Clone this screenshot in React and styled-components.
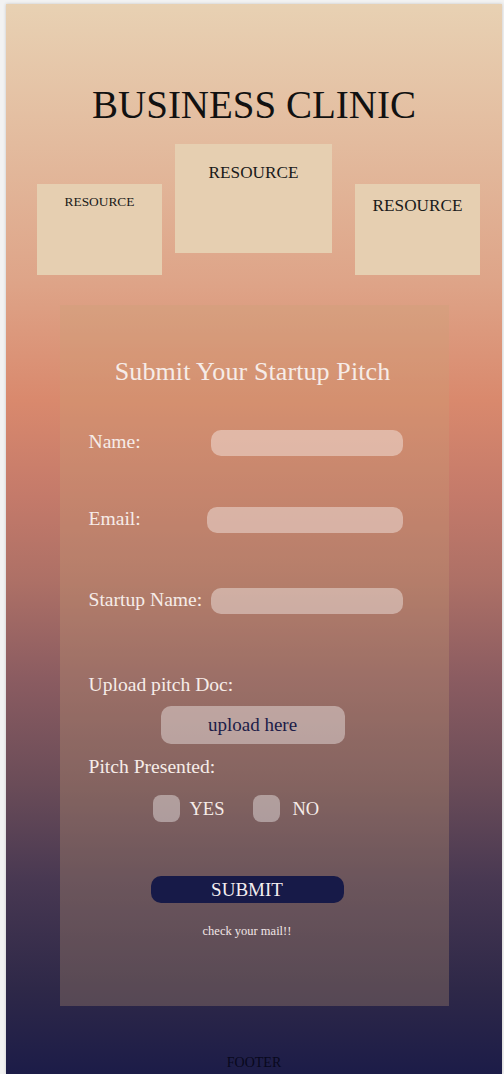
import styled, { createGlobalStyle } from "styled-components";

const GlobalStyle = createGlobalStyle`
  html, body {
    margin: 0;
    padding: 0;
    background: #f2f2f2;
  }
  body {
    padding: 4px 2px 0 6px;
    font-family: "Liberation Serif", "DejaVu Serif", serif;
  }
`;

const Page = styled.div`
  height: 1070px;
  display: flex;
  flex-direction: column;
  align-items: center;
  box-shadow: 0 0 3px rgba(0, 0, 0, 0.18);
  background: linear-gradient(
    to bottom,
    #e8d1b3 0%,
    #e3bb9e 13%,
    #dea488 26%,
    #d9896d 37%,
    #c47a6a 46%,
    #ad7066 54%,
    #8b5c61 63%,
    #6a4c58 73%,
    #483852 82%,
    #2e2848 92%,
    #1c1c48 100%
  );
  overflow: hidden;
`;

const Title = styled.h1`
  margin: 81px 0 0;
  font-size: 39px;
  line-height: 1;
  font-weight: 400;
  color: #111;
`;

const ResourceRow = styled.div`
  align-self: stretch;
  display: flex;
  align-items: flex-start;
  margin-top: 20px;
  height: 131px;
`;

const Resource = styled.div`
  margin-left: ${(p) => p.left}px;
  margin-top: ${(p) => p.top}px;
  width: ${(p) => p.w}px;
  height: ${(p) => p.h}px;
  padding-top: ${(p) => p.pad}px;
  box-sizing: border-box;
  background: #e6cfb1;
  text-align: center;
  font-size: ${(p) => p.size}px;
  line-height: 1;
  color: #1a1a1a;
`;

const Panel = styled.div`
  margin-top: 30px;
  width: 389px;
  height: 701px;
  box-sizing: border-box;
  padding-top: 54px;
  display: flex;
  flex-direction: column;
  background: rgba(202, 163, 118, 0.28);
  color: #f6ece8;
`;

const PanelTitle = styled.h2`
  margin: 0 0 0 -3px;
  font-size: 26px;
  line-height: 1;
  font-weight: 400;
  text-align: center;
  letter-spacing: 0.1px;
`;

const Row = styled.div`
  display: flex;
  align-items: center;
  height: 26px;
  margin-top: ${(p) => p.gap}px;
  padding: 0 46px 0 29px;
`;

const Label = styled.label`
  flex: 1;
  font-size: 19.6px;
  line-height: 1;
  margin-top: -3px;
`;

const Field = styled.input`
  box-sizing: border-box;
  width: ${(p) => p.w}px;
  height: 26px;
  padding: 0 10px;
  border: none;
  border-radius: 10px;
  background: rgba(255, 255, 255, 0.39);
  outline: none;
`;

const BlockLabel = styled.div`
  margin-top: ${(p) => p.gap}px;
  padding-left: 29px;
  font-size: 19.6px;
  line-height: 1;
`;

const UploadButton = styled.button`
  margin: 11px 0 0 101px;
  width: 184px;
  height: 38px;
  border: none;
  border-radius: 10px;
  background: rgba(255, 255, 255, 0.39);
  color: #1c1c48;
  font-family: inherit;
  font-size: 19px;
  line-height: 1;
`;

const Choices = styled.div`
  display: flex;
  align-items: center;
  margin: 19px 0 0 93px;
  height: 27px;
`;

const Box = styled.span`
  width: 27px;
  height: 27px;
  border-radius: 8px;
  background: rgba(255, 255, 255, 0.39);
`;

const ChoiceText = styled.span`
  margin: 2px ${(p) => p.after}px 0 ${(p) => p.before}px;
  font-size: 18.5px;
  line-height: 1;
`;

const SubmitButton = styled.button`
  margin: 54px 0 0 91px;
  width: 193px;
  height: 27px;
  border: none;
  border-radius: 10px;
  background: #171a48;
  color: #f4eef0;
  font-family: inherit;
  font-size: 19px;
  line-height: 1;
`;

const Note = styled.div`
  margin: 22px 0 0 91px;
  width: 193px;
  text-align: center;
  font-size: 12.5px;
  line-height: 1;
  color: #f1e6e6;
`;

const Footer = styled.footer`
  margin-top: 50px;
  font-size: 14px;
  line-height: 1;
  color: #08081c;
`;

export default function App() {
  return (
    <>
      <GlobalStyle />
      <Page>
        <Title>BUSINESS CLINIC</Title>
        <ResourceRow>
          <Resource left={31} top={40} w={125} h={91} pad={11} size={13.4}>
            RESOURCE
          </Resource>
          <Resource left={13} top={0} w={157} h={109} pad={20} size={17.2}>
            RESOURCE
          </Resource>
          <Resource left={23} top={40} w={125} h={91} pad={13} size={17.2}>
            RESOURCE
          </Resource>
        </ResourceRow>

        <Panel>
          <PanelTitle>Submit Your Startup Pitch</PanelTitle>
          <Row gap={45}>
            <Label>Name:</Label>
            <Field w={192} />
          </Row>
          <Row gap={51}>
            <Label>Email:</Label>
            <Field w={196} />
          </Row>
          <Row gap={55}>
            <Label>Startup Name:</Label>
            <Field w={192} />
          </Row>
          <BlockLabel gap={61}>Upload pitch Doc:</BlockLabel>
          <UploadButton>upload here</UploadButton>
          <BlockLabel gap={13}>Pitch Presented:</BlockLabel>
          <Choices>
            <Box />
            <ChoiceText before={10} after={29}>YES</ChoiceText>
            <Box />
            <ChoiceText before={12} after={0}>NO</ChoiceText>
          </Choices>
          <SubmitButton>SUBMIT</SubmitButton>
          <Note>check your mail!!</Note>
        </Panel>

        <Footer>FOOTER</Footer>
      </Page>
    </>
  );
}
